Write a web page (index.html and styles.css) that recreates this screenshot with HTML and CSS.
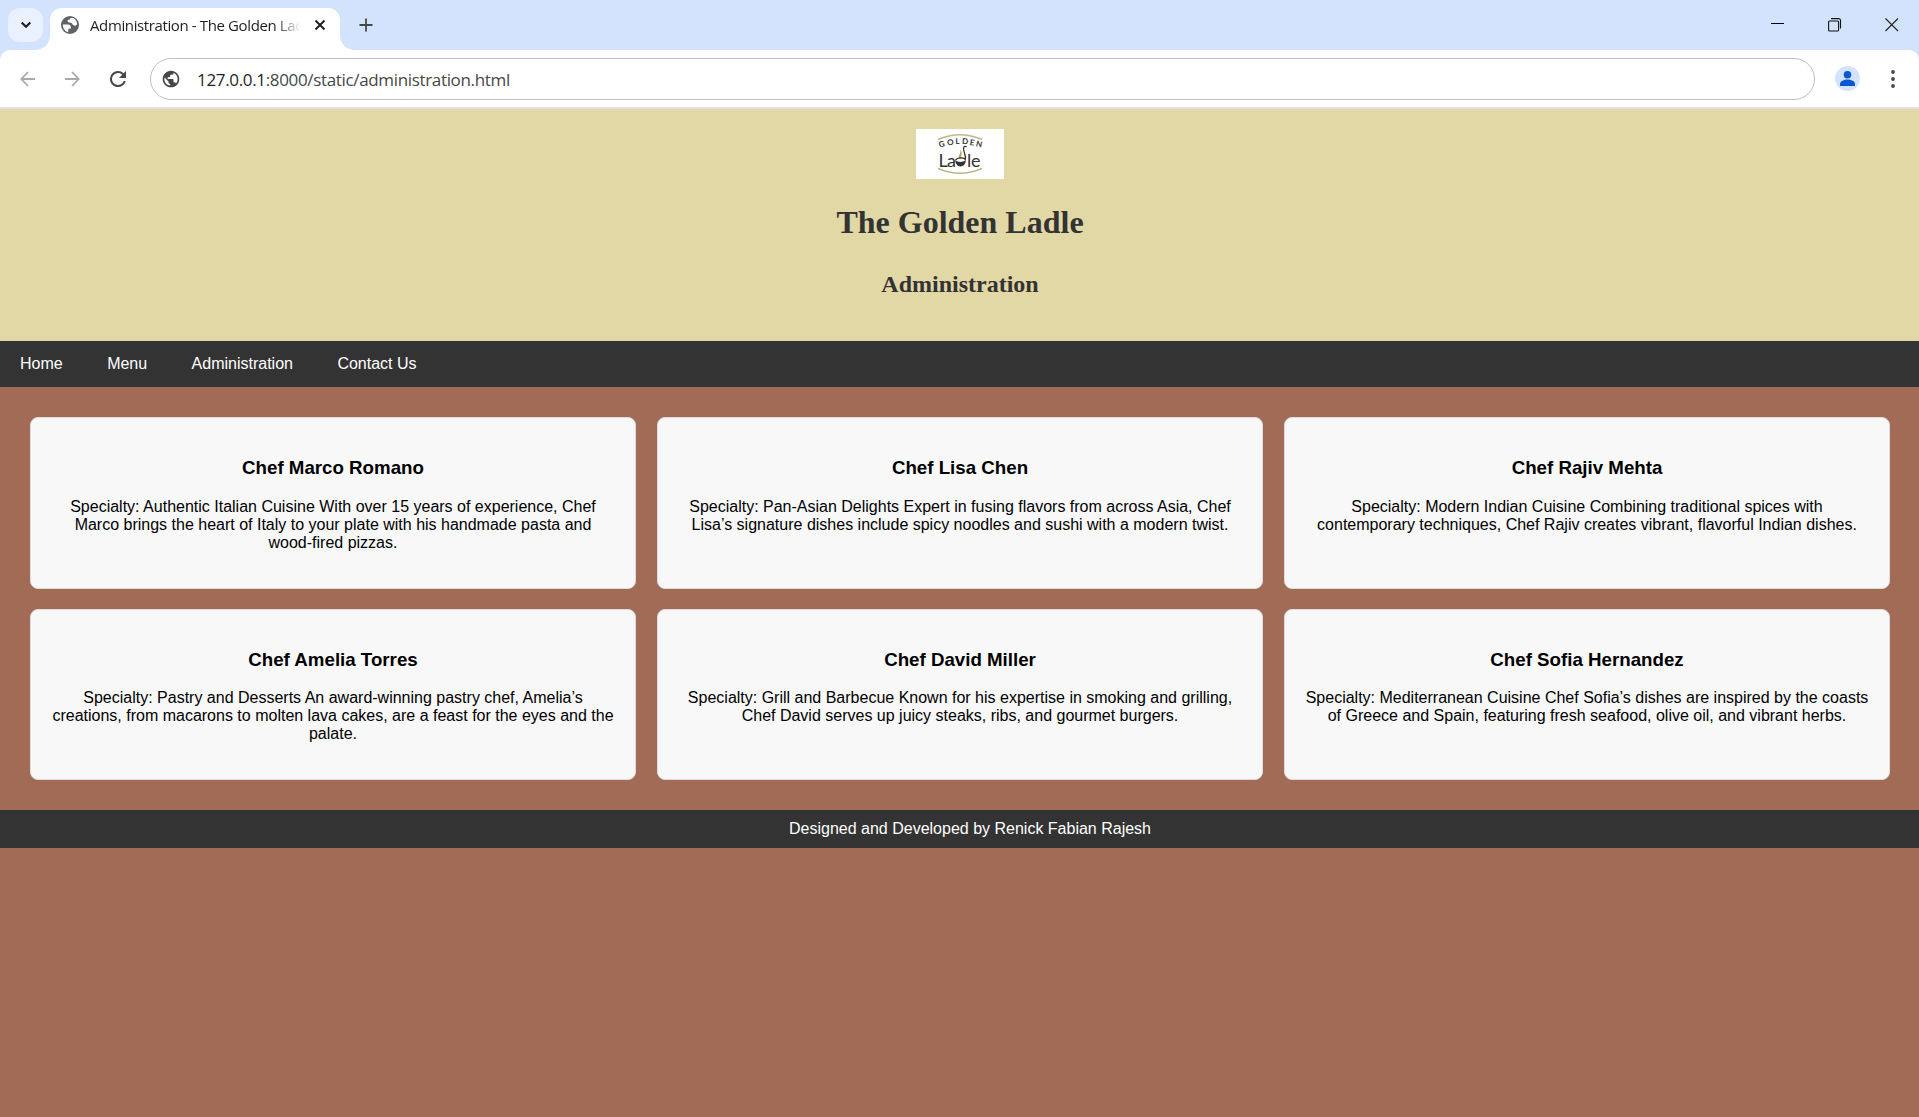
FILE: index.html
```html
<!DOCTYPE html>
<html lang="en">
<head>
<meta charset="utf-8">
<title>Administration - The Golden Ladle</title>
<link rel="stylesheet" href="styles.css">
</head>
<body>
<div class="browser">
  <div class="tab-strip">
    <button class="tab-search" aria-label="Search tabs"><svg width="12" height="8" viewBox="0 0 12 8"><path d="M1.7 1.5 6 5.8l4.3-4.3" fill="none" stroke="#1f1f1f" stroke-width="2.2"/></svg></button>
    <div class="tab">
      <svg class="tab-globe" width="22" height="22" viewBox="0 0 22 22"><circle cx="11" cy="11" r="9" fill="#5f6368"/><path d="M3.800 10.500h4.500c3 0 3.800 1.500 3.500 4.300H9.200v3.400c-3.200-.8-5.400-3.800-5.400-7.700zM11.500 4h2.700c2.200 1.200 3.800 3.600 4 6.300-.8 1.500-2.300 1.700-3.700.9-1.500-.9-1.200-2.200-2.700-2.400-1.700-.2-3.200-.3-3.200-2 0-1.500 1.300-1.300 2.200-1.400z" fill="#fff"/></svg>
      <span class="tab-title">Administration - The Golden Ladle</span>
      <svg class="tab-close" width="12" height="12" viewBox="0 0 12 12"><path d="m1.5 1.500 9 9m0-9-9 9" stroke="#1f1f1f" stroke-width="1.900"/></svg>
    </div>
    <svg class="new-tab" width="14" height="14" viewBox="0 0 14 14"><path d="M7 .5v13M.5 7h13" stroke="#474747" stroke-width="1.800"/></svg>
    <div class="window-controls">
      <svg width="14" height="14" viewBox="0 0 14 14"><path d="M0 5.500h13" stroke="#000"/></svg>
      <svg width="14" height="14" viewBox="0 0 14 14" fill="none" stroke="#111" stroke-width="1.100"><rect x=".6" y="3" width="10" height="10" rx="1"/><path d="M3 .6h7.500a2 2 0 0 1 2 2v8"/></svg>
      <svg width="14" height="14" viewBox="0 0 14 14"><path d="m.5.500 12.500 12.500M13 .5.500 13" stroke="#222" stroke-width="1.100"/></svg>
    </div>
  </div>
  <div class="toolbar">
    <div class="nav-icons">
      <svg width="15" height="16" viewBox="0 0 15 16" fill="none" stroke="#a9a9a9" stroke-width="1.800"><path d="M15 8H1.500M8 1 1.300 8 8 15"/></svg>
      <svg width="15" height="16" viewBox="0 0 15 16" fill="none" stroke="#a9a9a9" stroke-width="1.800"><path d="M0 8h13.500M7 1l6.700 7L7 15"/></svg>
      <svg width="16" height="16" viewBox="4 4 16 16" fill="#474747"><path d="M17.650 6.350A7.950 7.950 0 0 0 12 4a8 8 0 1 0 7.730 10h-2.080A6 6 0 1 1 12 6c1.660 0 3.140.69 4.220 1.780L13 11h7V4z"/></svg>
    </div>
    <div class="address">
      <svg width="20" height="20" viewBox="0 0 24 24" fill="#474747"><path d="M12 2C6.480 2 2 6.480 2 12s4.480 10 10 10 10-4.480 10-10S17.520 2 12 2zm-1 17.930c-3.950-.49-7-3.850-7-7.930 0-.62.080-1.210.210-1.790L9 15v1c0 1.100.9 2 2 2v1.930zm6.900-2.540c-.26-.81-1-1.390-1.900-1.390h-1v-3c0-.55-.45-1-1-1H8v-2h2c.55 0 1-.45 1-1V7h2c1.100 0 2-.9 2-2v-.41c2.930 1.190 5 4.060 5 7.410 0 2.080-.8 3.970-2.100 5.390z"/></svg>
      <span class="url"><span class="host">127.0.0.1</span>:8000/static/administration.html</span>
    </div>
    <svg class="profile" width="25" height="25" viewBox="0 0 25 25"><circle cx="12.500" cy="12.500" r="12.500" fill="#d3e3fd"/><g fill="#0b57d0"><circle cx="12.500" cy="8.700" r="3.800"/><path d="M5 20v-2c0-3 4-4.500 7.500-4.500S20 15 20 18v2z"/></g></svg>
    <svg class="more" width="4" height="20" viewBox="0 0 4 20" fill="#474747"><circle cx="2" cy="3" r="1.900"/><circle cx="2" cy="10" r="1.900"/><circle cx="2" cy="17" r="1.900"/></svg>
  </div>
</div>

<header class="site-header">
  <svg class="logo" width="88" height="50" viewBox="0 0 88 50" role="img" aria-label="Golden Ladle">
    <rect width="88" height="50" fill="#fff"/>
    <path d="M22 10.500Q44 1 66 10.500M22 39.500Q44 49 66 39.500" fill="none" stroke="#c3b48a" stroke-width="1.600"/>
    <text class="logo-arc" x="23.500 31.500 39.500 46 53.500 59.500" y="18.500 16.500 15 15 16 17" rotate="-14 -8 -2 2 8 14">GOLDEN</text>
    <text class="logo-word" x="22.500 31" y="37.500">La</text>
    <text class="logo-word" x="51 55" y="37.500">le</text>
    <path d="M44.500 30C40 27 46 25 44 21c4 3 0 5 1.500 8" fill="#b9a060"/>
    <path d="M49 31c2-4-2-8-1.500-12 .3-1.800 2-2 3-1M39.500 31c2-3 8-2.500 9.500-1" fill="none" stroke="#333" stroke-width="1.300"/>
    <path d="M39 31q5 4 11 0-1 6.500-5.500 6.500T39 31" fill="#333"/>
  </svg>
  <h1>The Golden Ladle</h1>
  <h2>Administration</h2>
</header>

<nav class="site-nav">
  <a>Home</a>
  <a>Menu</a>
  <a>Administration</a>
  <a>Contact Us</a>
</nav>

<main class="chefs">
  <article class="card"><h3>Chef Marco Romano</h3><p>Specialty: Authentic Italian Cuisine With over 15 years of experience, Chef Marco brings the heart of Italy to your plate with his handmade pasta and wood-fired pizzas.</p></article>
  <article class="card"><h3>Chef Lisa Chen</h3><p>Specialty: Pan-Asian Delights Expert in fusing flavors from across Asia, Chef Lisa’s signature dishes include spicy noodles and sushi with a modern twist.</p></article>
  <article class="card"><h3>Chef Rajiv Mehta</h3><p>Specialty: Modern Indian Cuisine Combining traditional spices with contemporary techniques, Chef Rajiv creates vibrant, flavorful Indian dishes.</p></article>
  <article class="card"><h3>Chef Amelia Torres</h3><p>Specialty: Pastry and Desserts An award-winning pastry chef, Amelia’s creations, from macarons to molten lava cakes, are a feast for the eyes and the palate.</p></article>
  <article class="card"><h3>Chef David Miller</h3><p>Specialty: Grill and Barbecue Known for his expertise in smoking and grilling, Chef David serves up juicy steaks, ribs, and gourmet burgers.</p></article>
  <article class="card"><h3>Chef Sofia Hernandez</h3><p>Specialty: Mediterranean Cuisine Chef Sofia’s dishes are inspired by the coasts of Greece and Spain, featuring fresh seafood, olive oil, and vibrant herbs.</p></article>
</main>

<footer class="site-footer">Designed and Developed by Renick Fabian Rajesh</footer>
</body>
</html>
```
FILE: styles.css
```css
* { box-sizing: border-box; }
body {
  margin: 0;
  min-height: 100vh;
  background: #a26b55;
  font: 16px/18px "Liberation Sans", Arial, sans-serif;
  color: #000;
}
svg { display: block; flex: none; }

/* Browser frame */
.browser {
  background: #d3e3fd;
  font-family: "Open Sans", "Noto Sans", sans-serif;
}
.tab-strip {
  display: flex;
  height: 50px;
  padding: 8px 20px 0 8px;
}
.tab-search {
  display: grid;
  place-items: center;
  width: 35px;
  height: 34px;
  padding: 0;
  border: 0;
  border-radius: 12px;
  background: #e9f1fe;
}
.tab {
  position: relative;
  display: flex;
  align-items: center;
  width: 290px;
  height: 42px;
  margin-left: 7px;
  padding: 0 14px 8px 9px;
  border-radius: 12px 12px 0 0;
  background: #fff;
}
.tab::before,
.tab::after {
  content: "";
  position: absolute;
  bottom: 0;
  width: 14px;
  height: 14px;
}
.tab::before {
  left: -14px;
  background: radial-gradient(circle at 0 0, transparent 13.5px, #fff 14px);
}
.tab::after {
  right: -14px;
  background: radial-gradient(circle at 100% 0, transparent 13.5px, #fff 14px);
}
.tab-title {
  width: 209px;
  margin: 0 15px 0 9px;
  overflow: hidden;
  white-space: nowrap;
  font-size: 15px;
  line-height: 24px;
  letter-spacing: -0.38px;
  color: #1f1f1f;
  -webkit-mask-image: linear-gradient(90deg, #000 185px, transparent 211px);
  mask-image: linear-gradient(90deg, #000 185px, transparent 211px);
}
.new-tab { margin: 10px 0 0 19px; }
.window-controls {
  display: flex;
  gap: 43px;
  margin: 10px 0 0 auto;
}
.toolbar {
  display: flex;
  align-items: center;
  height: 59px;
  padding: 0 24px 0 20px;
  border-bottom: 2px solid #dfe1e3;
  border-radius: 10px 10px 0 0;
  background: #fff;
}
.nav-icons {
  display: flex;
  gap: 30px;
}
.address {
  display: flex;
  flex: 1;
  align-items: center;
  height: 42px;
  margin: 1px 20px 0 24px;
  padding-left: 10px;
  border: 1px solid #c0c0c0;
  border-radius: 21px;
}
.url {
  margin-left: 16px;
  padding-top: 1px;
  font-size: 17px;
  line-height: 24px;
  letter-spacing: -0.34px;
  color: #474747;
}
.host { color: #1f1f1f; }
.more { margin-left: 31px; }

/* Page */
.site-header {
  display: flex;
  flex-direction: column;
  align-items: center;
  height: 232px;
  padding: 20px 0 0 1px;
  background: #e2d8a6;
  color: #333;
  font-family: "Liberation Serif", "Times New Roman", serif;
}
.logo-arc {
  font: bold 8px Lato, sans-serif;
  fill: #333;
}
.logo-word {
  font: 18px Lato, sans-serif;
  fill: #333;
}
h1 {
  margin: 25px 0 0;
  font-size: 32px;
  line-height: 37px;
}
h2 {
  margin: 30px 0 0;
  font-size: 24px;
  line-height: 27px;
}
.site-nav {
  display: flex;
  gap: 44.45px;
  height: 46px;
  padding: 14px 20px;
  background: #333;
  color: #fff;
}
.chefs {
  display: grid;
  grid-template-columns: repeat(3, 1fr);
  gap: 20px 21px;
  padding: 30.35px 29px 30px 30px;
}
.card {
  min-height: 171.4px;
  padding: 20px;
  border: 1px solid #ddd;
  border-radius: 8px;
  background: #f8f8f8;
  text-align: center;
}
.card h3 {
  margin: 18.72px 0;
  font-size: 18.72px;
  line-height: 22px;
}
.card p { margin: 0 0 16px; }
.site-footer {
  height: 38px;
  padding: 10px 0 10px 21px;
  background: #333;
  color: #fff;
  text-align: center;
}
```
